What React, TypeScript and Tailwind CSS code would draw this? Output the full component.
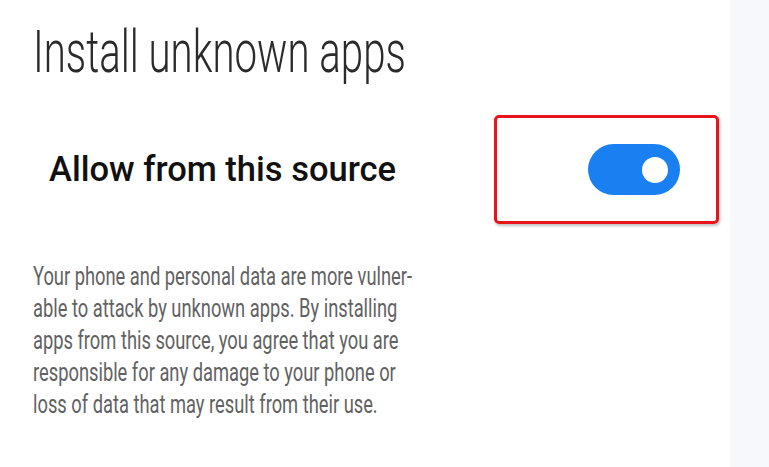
export default function App() {
  return (
    <div className="flex h-[467px] w-[769px] overflow-hidden bg-white font-['Roboto',sans-serif]">
      <div className="flex w-[730px] flex-col pl-[33px] pt-[12px]">
        <h1 className="origin-left scale-x-[0.67] whitespace-nowrap text-[60px] font-light leading-[80px] text-[#2a2a2a]">
          Install unknown apps
        </h1>

        <div className="mt-[23px] flex items-center">
          <p className="w-[461px] pl-[16px] text-[34.5px] font-medium text-[#111]">Allow from this source</p>
          <div className="flex h-[109px] w-[225px] items-center justify-end rounded-[5px] border-[3px] border-[#e8141b] pr-[36px] shadow-[1px_2px_3px_rgba(0,0,0,0.25)]">
            <div className="flex h-[51px] w-[92px] items-center justify-end rounded-full bg-[#1a7ff0] pr-[12px]">
              <div className="h-[26px] w-[26px] rounded-full bg-white" />
            </div>
          </div>
        </div>

        <p className="mt-[37px] origin-left scale-x-[0.732] whitespace-nowrap text-[25px] leading-[32px] text-[#626262]">
          Your phone and personal data are more vulner-
          <br />
          able to attack by unknown apps. By installing
          <br />
          apps from this source, you agree that you are
          <br />
          responsible for any damage to your phone or
          <br />
          loss of data that may result from their use.
        </p>
      </div>
      <div className="flex-1 bg-[#f7f8fc]" />
    </div>
  )
}
